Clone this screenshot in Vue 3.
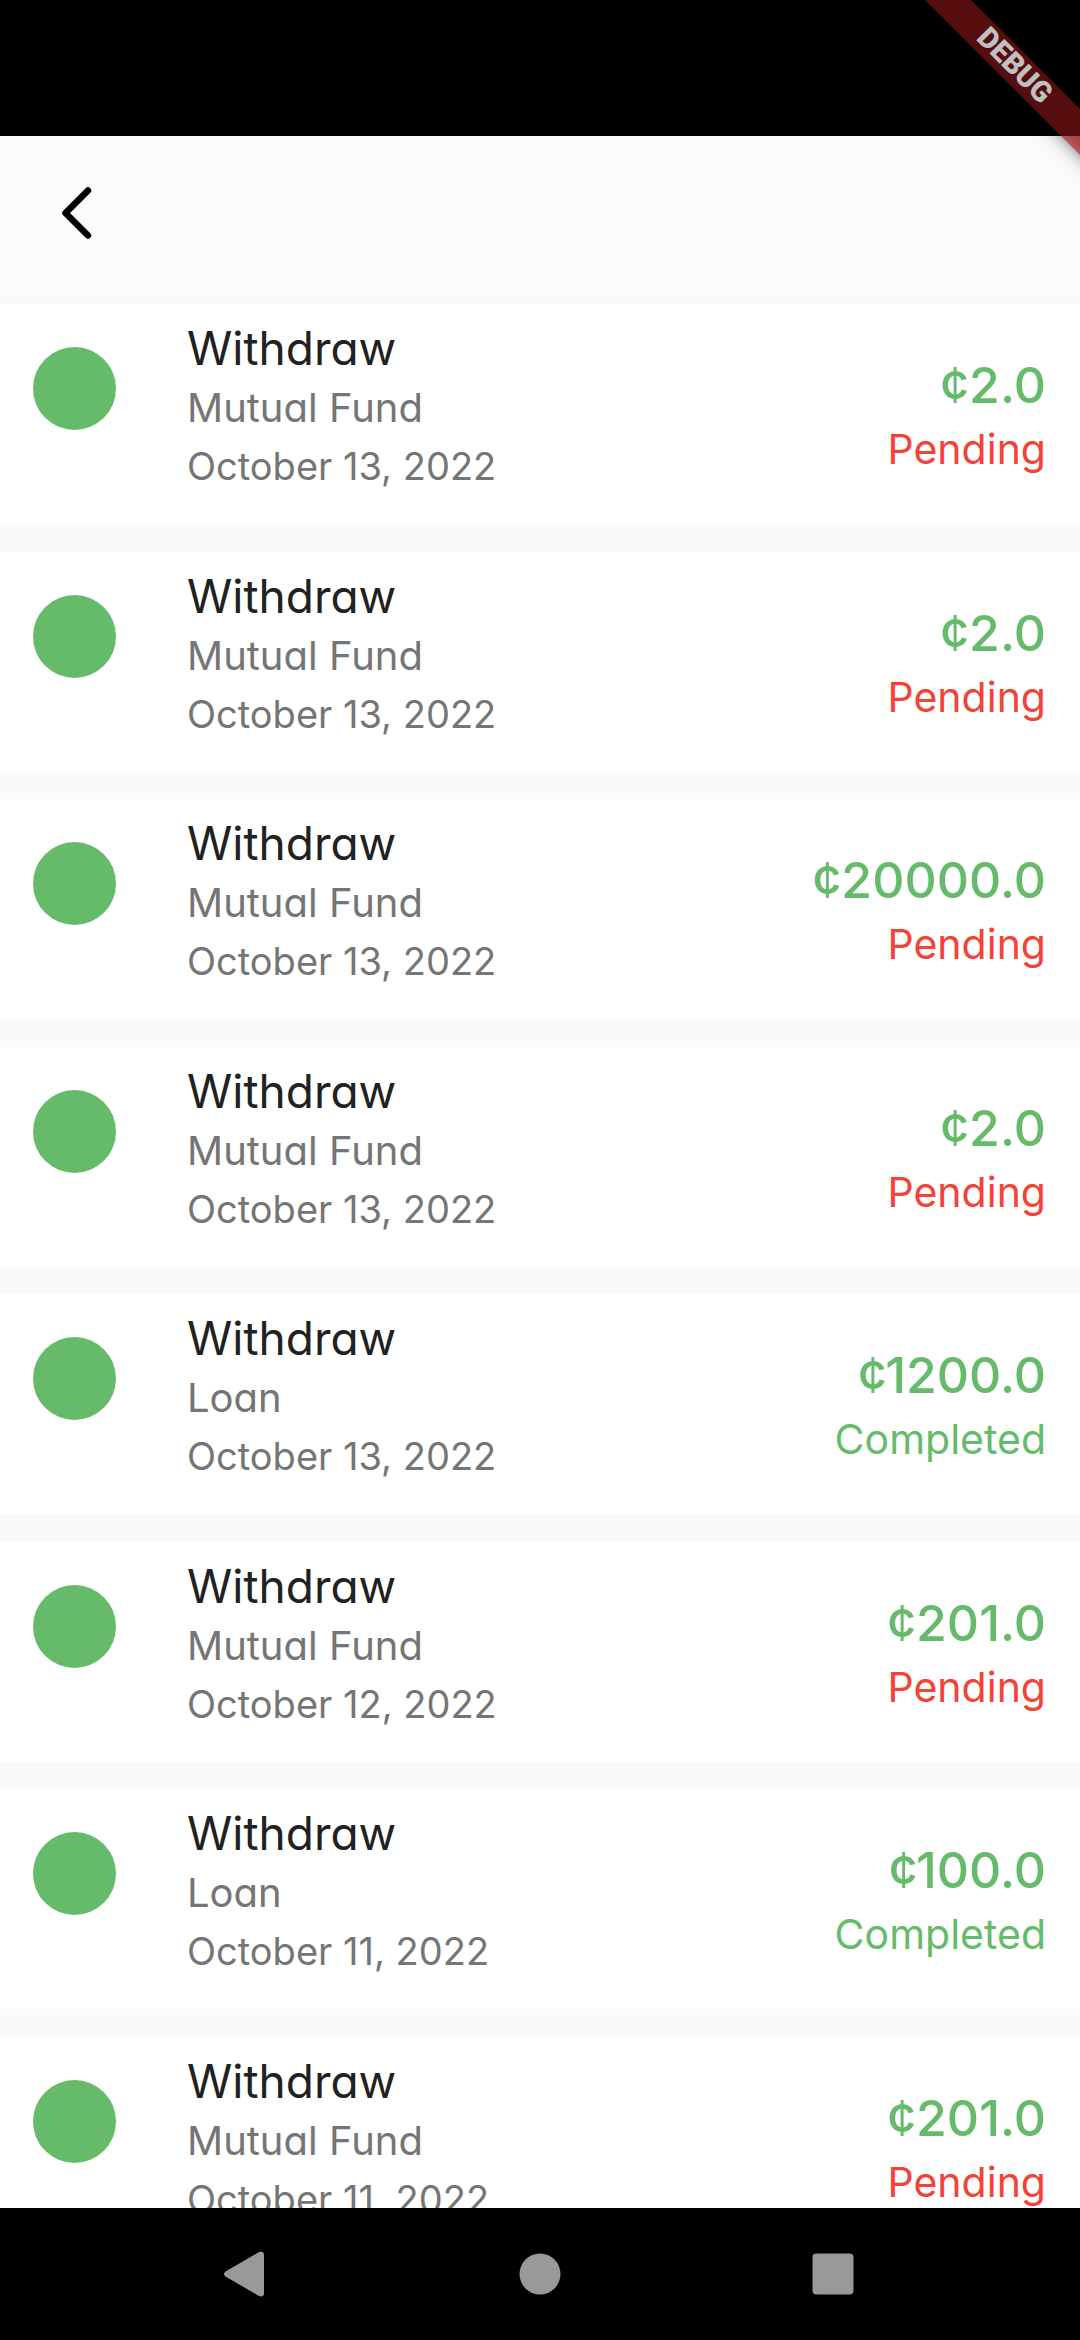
<script setup>
const transactions = [
  { id: 1, title: 'Withdraw', product: 'Mutual Fund', date: 'October 13, 2022', amount: '¢2.0', status: 'Pending' },
  { id: 2, title: 'Withdraw', product: 'Mutual Fund', date: 'October 13, 2022', amount: '¢2.0', status: 'Pending' },
  { id: 3, title: 'Withdraw', product: 'Mutual Fund', date: 'October 13, 2022', amount: '¢20000.0', status: 'Pending' },
  { id: 4, title: 'Withdraw', product: 'Mutual Fund', date: 'October 13, 2022', amount: '¢2.0', status: 'Pending' },
  { id: 5, title: 'Withdraw', product: 'Loan', date: 'October 13, 2022', amount: '¢1200.0', status: 'Completed' },
  { id: 6, title: 'Withdraw', product: 'Mutual Fund', date: 'October 12, 2022', amount: '¢201.0', status: 'Pending' },
  { id: 7, title: 'Withdraw', product: 'Loan', date: 'October 11, 2022', amount: '¢100.0', status: 'Completed' },
  { id: 8, title: 'Withdraw', product: 'Mutual Fund', date: 'October 11, 2022', amount: '¢201.0', status: 'Pending' },
]
</script>

<template>
  <div class="screen">
    <div class="status-bar"></div>

    <header class="app-bar">
      <button class="back" type="button" aria-label="Back">
        <svg width="30" height="54" viewBox="0 0 30 54" fill="none" stroke="#000" stroke-width="6.500" stroke-linecap="round" stroke-linejoin="round">
          <path d="M26 4.500 3.500 27 26 49.500" />
        </svg>
      </button>
    </header>

    <main class="content">
      <ul class="list">
        <li v-for="t in transactions" :key="t.id" class="row">
          <span class="dot"></span>
          <div class="details">
            <span class="title">{{ t.title }}</span>
            <span class="product">{{ t.product }}</span>
            <span class="date">{{ t.date }}</span>
          </div>
          <div class="summary">
            <span class="amount">{{ t.amount }}</span>
            <span class="status" :class="t.status.toLowerCase()">{{ t.status }}</span>
          </div>
        </li>
      </ul>
    </main>

    <nav class="nav-bar">
      <button type="button" aria-label="System back">
        <svg width="48" height="48" viewBox="0 0 48 48" fill="#999">
          <path d="M2.500 21.500 36 2Q41 .5 41 5V43Q41 47.500 36 46L2.500 26.500Q-.5 24 2.500 21.500Z" />
        </svg>
      </button>
      <button type="button" aria-label="Home">
        <svg width="48" height="48" viewBox="0 0 48 48" fill="#999"><circle cx="24" cy="24" r="20.500" /></svg>
      </button>
      <button type="button" aria-label="Recent apps">
        <svg width="48" height="48" viewBox="0 0 48 48" fill="#999"><rect x="3.500" y="3.500" width="41" height="41" rx="4" /></svg>
      </button>
    </nav>

    <svg class="banner" width="200" height="200" viewBox="0 0 200 200">
      <defs>
        <filter id="soft" x="-30%" y="-30%" width="160%" height="160%">
          <feGaussianBlur stdDeviation="9" />
        </filter>
      </defs>
      <path d="M25 -20 71 -20 240 149 240 195Z" fill="#000" fill-opacity=".5" filter="url(#soft)" />
      <path d="M45 0H91L200 109V155Z" fill="#b71c1c" fill-opacity=".627" />
      <path d="M0 0H200V136H0Z" fill="#000" fill-opacity=".25" />
      <text x="135" y="65" transform="rotate(45 135 65)" text-anchor="middle" dy="10">DEBUG</text>
    </svg>
  </div>
</template>

<style>
body {
  background: #fafafa;
}
</style>

<style scoped>
.screen {
  position: relative;
  display: flex;
  flex-direction: column;
  height: 100vh;
  overflow: hidden;
  background: #fafafa;
  font-family: Inter, "Liberation Sans", sans-serif;
  font-feature-settings: "cv11";
}

.status-bar {
  flex: none;
  height: 136px;
  background: #000;
}

.app-bar {
  flex: none;
  display: flex;
  align-items: center;
  height: 154px;
  padding: 0 32px;
  background: #fbfbfb;
}

button {
  display: flex;
  align-items: center;
  justify-content: center;
  padding: 0;
  border: 0;
  background: none;
}

.back {
  width: 90px;
  height: 90px;
}

.content {
  flex: 1;
  min-height: 0;
  overflow: hidden;
}

.list {
  margin: 0;
  padding: 14px 0 0;
  list-style: none;
}

.row {
  display: flex;
  height: 220px;
  margin-bottom: 28px;
  padding: 0 34px 0 33px;
  background: #fff;
  box-sizing: border-box;
}

.row:nth-child(even) {
  margin-bottom: 27px;
}

.dot {
  flex: none;
  width: 83px;
  height: 83px;
  margin-top: 43px;
  border-radius: 50%;
  background: #66bb6a;
}

.details {
  display: flex;
  flex: 1;
  flex-direction: column;
  margin-left: 71px;
  padding-top: 13px;
}

.summary {
  display: flex;
  flex-direction: column;
  align-items: flex-end;
  padding-top: 46px;
}

.title,
.product,
.date,
.amount,
.status {
  line-height: 58px;
  white-space: nowrap;
}

.title {
  line-height: 62px;
  color: #212121;
  font-size: 46px;
}

.product,
.status {
  font-size: 40px;
}

.date {
  font-size: 38px;
}

.product,
.date {
  color: #757575;
}

.amount {
  line-height: 70px;
  color: #66bb6a;
  font-size: 50px;
  font-weight: 500;
}

.status {
  font-size: 41px;
}

.pending {
  color: #f44336;
}

.completed {
  color: #66bb6a;
}

.nav-bar {
  flex: none;
  display: flex;
  height: 132px;
  padding: 0 100px;
  background: #000;
}

.nav-bar button {
  flex: 1;
}

.banner {
  position: absolute;
  top: 0;
  right: 0;
}

.banner text {
  fill: #c0c0c0;
  font-family: Roboto, sans-serif;
  font-size: 29px;
  font-weight: 900;
}
</style>
